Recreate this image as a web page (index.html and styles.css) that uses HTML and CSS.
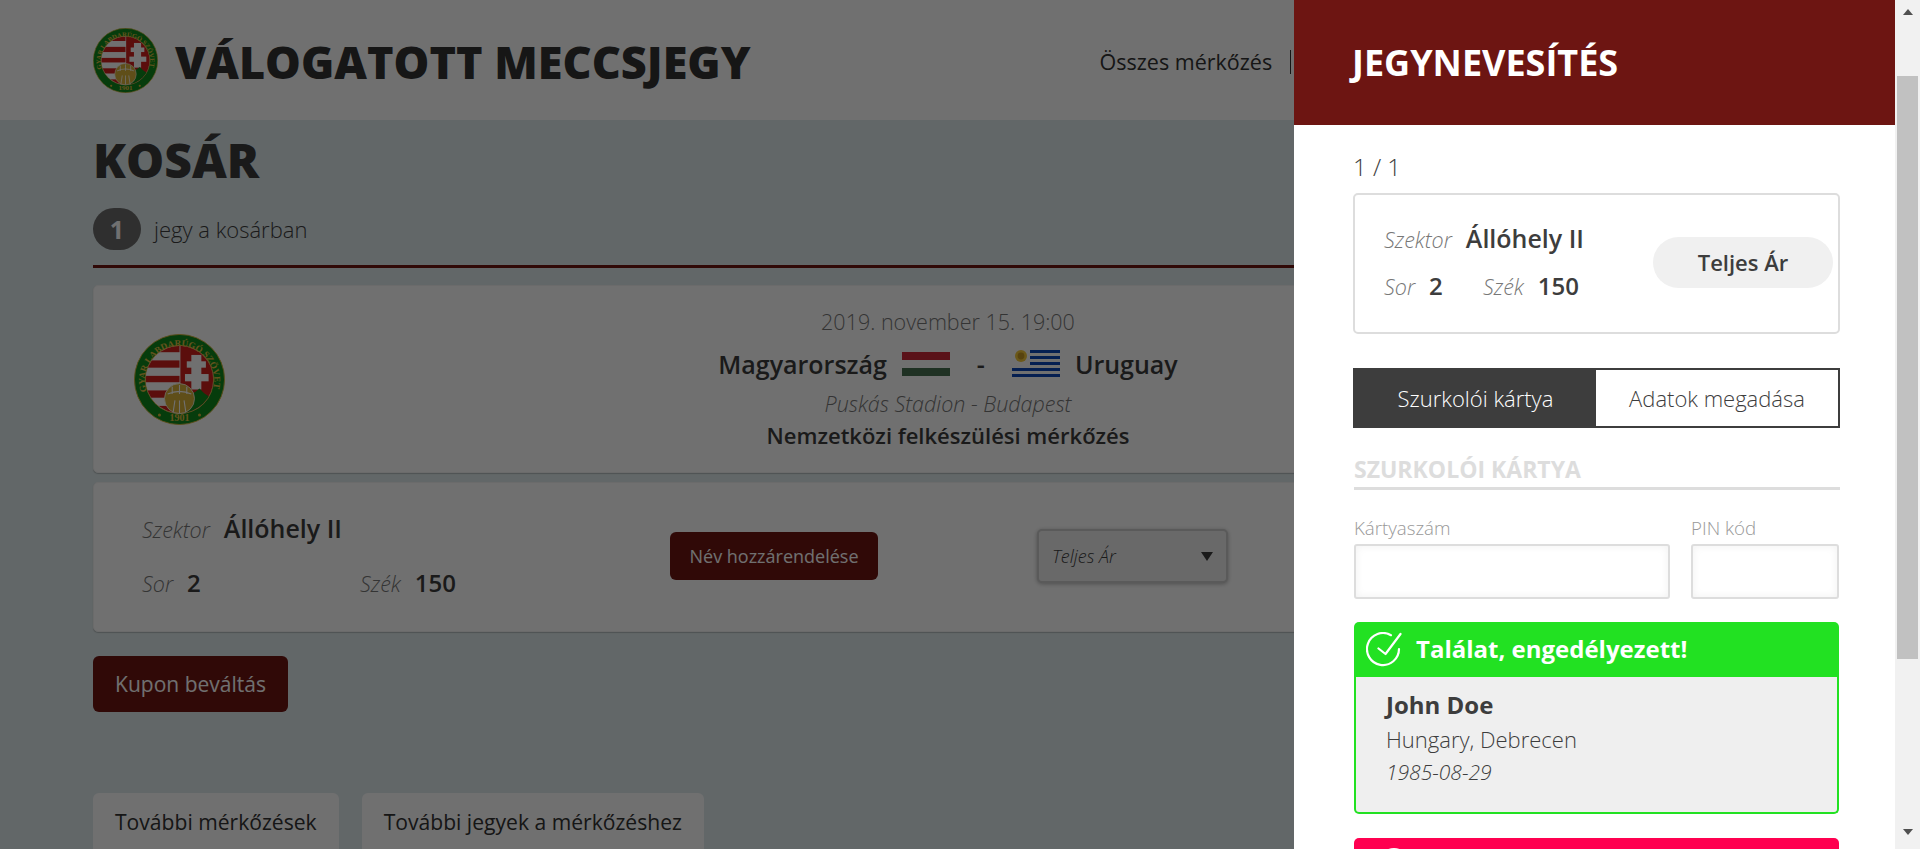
FILE: index.html
```html
<!DOCTYPE html>
<html lang="hu">
<head>
<meta charset="utf-8">
<title>Kosár</title>
<link rel="stylesheet" href="styles.css">
</head>
<body>
<svg class="defs" width="0" height="0" aria-hidden="true">
  <defs>
    <clipPath id="inner"><circle cx="50" cy="50" r="37"/></clipPath>
    <path id="arc-top" d="M13.5 62A38 38 0 1 1 86.5 62"/>
    <symbol id="mlsz" viewBox="0 0 100 100">
      <circle cx="50" cy="50" r="49.5" fill="#0f8a1c" stroke="#d8b23a" stroke-width="1"/>
      <circle cx="50" cy="50" r="37.5" fill="#fff" stroke="#d8b23a" stroke-width="1"/>
      <g clip-path="url(#inner)">
        <rect x="10" y="10" width="40" height="80" fill="#fff"/>
        <rect x="10" y="13" width="40" height="7" fill="#d0201c"/>
        <rect x="10" y="29" width="40" height="8" fill="#d0201c"/>
        <rect x="10" y="46" width="40" height="7" fill="#d0201c"/>
        <rect x="10" y="62" width="40" height="8" fill="#d0201c"/>
        <rect x="10" y="79" width="40" height="8" fill="#d0201c"/>
        <rect x="51" y="10" width="40" height="80" fill="#d0201c"/>
        <rect x="63" y="23" width="11" height="38" fill="#fff"/>
        <rect x="58" y="30" width="21" height="7" fill="#fff"/>
        <rect x="56" y="44" width="26" height="8" fill="#fff"/>
        <path d="M50 90V74q8-8 17-10l5-4 5 5 12 8v17z" fill="#0f8a1c"/>
      </g>
      <circle cx="50" cy="71" r="16.5" fill="#d8b23a" stroke="#fff" stroke-width=".8"/>
      <path d="M37 66q13-6 26 0M42 58v8M50 56v10M58 58v8M43 86l2-13M50 87V73M57 86l-2-13" fill="none" stroke="#fff" stroke-width="1.2"/>
      <text class="seal-text" font-size="10"><textPath href="#arc-top" startOffset="50%" text-anchor="middle">MAGYAR LABDARÚGÓ SZÖVETSÉG</textPath></text>
      <text class="seal-text" x="50" y="96" font-size="11" text-anchor="middle">1901</text>
      <circle cx="28" cy="89" r="1.7" fill="#d8b23a"/>
      <circle cx="72" cy="89" r="1.7" fill="#d8b23a"/>
    </symbol>
  </defs>
</svg>

<div class="page">
  <header class="site-header">
    <svg class="logo-small"><use href="#mlsz"/></svg>
    <div class="site-title">VÁLOGATOTT MECCSJEGY</div>
    <nav class="site-nav"><a>Összes mérkőzés</a><span class="nav-sep"></span></nav>
  </header>

  <main class="content">
    <h1 class="page-title">KOSÁR</h1>
    <div class="cart-count">
      <span class="count-badge">1</span>
      <span>jegy a kosárban</span>
    </div>

    <section class="card match-card">
      <svg class="logo-large"><use href="#mlsz"/></svg>
      <div class="match-info">
        <div class="match-date">2019. november 15. 19:00</div>
        <div class="match-teams">
          <span>Magyarország</span>
          <svg class="flag" viewBox="0 0 48 24"><rect width="48" height="8" fill="#ce2939"/><rect y="8" width="48" height="8" fill="#fff"/><rect y="16" width="48" height="8" fill="#477050"/></svg>
          <span class="dash">-</span>
          <svg class="flag flag-uy" viewBox="0 0 48 27">
            <rect width="48" height="27" fill="#fff"/>
            <g fill="#0d47b8"><rect x="18" y="0" width="30" height="3"/><rect x="18" y="6" width="30" height="3"/><rect x="18" y="12" width="30" height="3"/><rect y="18" width="48" height="3"/><rect y="24" width="48" height="3"/></g>
            <circle cx="9" cy="6" r="6" fill="#f3c83a"/><circle cx="9" cy="6" r="3.4" fill="#c79a22"/>
          </svg>
          <span>Uruguay</span>
        </div>
        <div class="match-venue">Puskás Stadion - Budapest</div>
        <div class="match-type">Nemzetközi felkészülési mérkőzés</div>
      </div>
    </section>

    <section class="card ticket-row">
      <div class="seat">
        <div class="seat-first"><i>Szektor</i><b>Állóhely II</b></div>
        <div class="seat-line"><div><i>Sor</i><b class="num">2</b></div><div><i>Szék</i><b class="num">150</b></div></div>
      </div>
      <div><button class="btn btn-assign">Név hozzárendelése</button></div>
      <div class="select-box"><span>Teljes Ár</span><span class="caret"></span></div>
    </section>

    <button class="btn btn-coupon">Kupon beváltás</button>

    <div class="more-links">
      <a class="more-link">További mérkőzések</a>
      <a class="more-link">További jegyek a mérkőzéshez</a>
    </div>
  </main>
</div>

<div class="overlay"></div>

<aside class="panel">
  <header class="panel-head">JEGYNEVESÍTÉS</header>
  <div class="panel-body">
    <div class="pager">1 / 1</div>
    <div class="panel-ticket">
      <div class="seat panel-seat">
        <div class="seat-first"><i>Szektor</i><b>Állóhely II</b></div>
        <div class="seat-line"><div><i>Sor</i><b class="num">2</b></div><div><i>Szék</i><b class="num">150</b></div></div>
      </div>
      <div class="price-pill">Teljes Ár</div>
    </div>
    <div class="tabs">
      <div class="tab tab-active">Szurkolói kártya</div>
      <div class="tab">Adatok megadása</div>
    </div>
    <h2 class="section-title">SZURKOLÓI KÁRTYA</h2>
    <div class="form-row">
      <label class="field field-card">Kártyaszám<span class="input"></span></label>
      <label class="field field-pin">PIN kód<span class="input"></span></label>
    </div>
    <div class="result result-ok">
      <div class="result-head">
        <svg class="check" viewBox="0 0 36 36"><path d="M25 3.2A16 16 0 1 0 33 17" fill="none" stroke="#fff" stroke-width="2.2" stroke-linecap="round"/><path d="M12.5 16.5l7 5.5L34.5 2" fill="none" stroke="#fff" stroke-width="2.2" stroke-linecap="round" stroke-linejoin="round"/></svg>
        <span class="result-title">Találat, engedélyezett!</span>
      </div>
      <div class="result-body">
        <div class="person-name">John Doe</div>
        <div class="person-place">Hungary, Debrecen</div>
        <div class="person-date">1985-08-29</div>
      </div>
    </div>
    <div class="result-error"><span class="error-icon"></span></div>
  </div>
</aside>

<div class="scrollbar">
  <span class="arrow arrow-up"></span>
  <span class="thumb"></span>
  <span class="arrow arrow-down"></span>
</div>
</body>
</html>
```

FILE: styles.css
```css
* { box-sizing: border-box; }
html, body { margin: 0; height: 849px; overflow: hidden; }
body {
  position: relative;
  font-family: "Open Sans", "Liberation Sans", sans-serif;
  color: #3d3d3d;
  background: #dfeaec;
}
.defs { position: absolute; }
.seal-text { font-family: "Liberation Serif", serif; fill: #e3bd45; font-weight: 700; }

.page { width: 1920px; }
.site-header {
  display: flex;
  align-items: center;
  height: 120px;
  padding: 0 93px;
  background: #fff;
}
.logo-small { width: 65px; height: 65px; }
.site-title {
  margin: 3px 0 0 17px;
  font-size: 45px;
  font-weight: 800;
  color: #333;
  line-height: 1;
  white-space: nowrap;
}
.site-nav { display: flex; align-items: center; margin: 3px 0 0 349px; font-size: 21.5px; color: #333; white-space: nowrap; }
.nav-sep { width: 1px; height: 24px; margin-left: 18px; background: #333; }

.content { width: 1734px; margin-left: 93px; }
.page-title { margin: 0; font-size: 48px; font-weight: 800; line-height: 80px; color: #3d3d3d; }
.cart-count {
  display: flex;
  align-items: center;
  gap: 13px;
  margin-top: 8px;
  padding-bottom: 15px;
  border-bottom: 3px solid #6d1512;
  font-size: 22px;
  font-weight: 300;
}
.count-badge {
  width: 48px;
  height: 42px;
  border-radius: 21px;
  background: #6b6b6b;
  color: #fff;
  font-size: 25px;
  font-weight: 700;
  text-align: center;
  line-height: 42px;
}
.card {
  background: #fff;
  border: 1px solid #f4f4f4;
  border-radius: 5px;
  box-shadow: 0 1px 1px rgba(0,0,0,.2);
}
.match-card {
  display: grid;
  grid-template-columns: 91px 1446px;
  align-items: center;
  height: 188px;
  margin-top: 17px;
  padding-left: 40px;
}
.logo-large { width: 91px; height: 91px; }
.match-info { padding-bottom: 2px; text-align: center; }
.match-date { font-size: 21.5px; font-weight: 300; line-height: 30px; color: #777; }
.match-teams {
  display: flex;
  justify-content: center;
  align-items: center;
  height: 42px;
  margin-top: 6px;
  font-size: 25px;
  font-weight: 600;
}
.flag { width: 48px; height: 24px; margin: 0 15px; }
.flag-uy { height: 27px; }
.dash { width: 14px; margin: 0 9px; }
.match-venue { margin-top: 4px; font-size: 21.5px; font-weight: 300; font-style: italic; line-height: 30px; color: #777; }
.match-type { margin-top: 1px; font-size: 22px; font-weight: 600; line-height: 30px; }

.ticket-row {
  display: grid;
  grid-template-columns: 528px 367px 191px;
  align-items: center;
  height: 150px;
  margin-top: 9px;
  padding-left: 48px;
}
.seat { padding-bottom: 2px; font-size: 25px; line-height: 30px; }
.seat-first, .seat-line > div { display: flex; align-items: baseline; }
.seat i { margin-right: 14px; font-size: 21.5px; font-weight: 300; color: #777; }
.seat b { font-weight: 600; }
.seat .num { font-size: 24px; }
.seat-line { display: grid; grid-template-columns: 218px auto; margin-top: 23px; }
.btn {
  border: 0;
  border-radius: 6px;
  background: #6d1512;
  color: #fff;
  font-family: inherit;
  padding: 0;
}
.btn-assign { display: block; width: 208px; height: 48px; margin-bottom: 2px; font-size: 18px; }
.select-box {
  display: flex;
  justify-content: space-between;
  align-items: center;
  height: 54px;
  margin-bottom: 2px;
  padding: 0 13px;
  border: 2px solid #ccc;
  border-radius: 5px;
  background: #f0f0f0;
  box-shadow: 0 1px 4px rgba(0,0,0,.3);
  font-size: 18px;
  font-style: italic;
  font-weight: 300;
}
.caret { width: 0; height: 0; border: 6px solid transparent; border-top: 9px solid #3d3d3d; border-bottom: 0; }
.btn-coupon { display: block; width: 195px; height: 56px; margin-top: 24px; font-size: 21px; }
.more-links { display: flex; gap: 23px; margin-top: 81px; }
.more-link {
  padding: 15px 22px;
  height: 70px;
  border-radius: 6px;
  background: #fff;
  font-size: 21.1px;
  line-height: 28px;
  color: #333;
}

.overlay { position: absolute; inset: 0; background: rgba(0,0,0,.56); }

.panel {
  position: absolute;
  top: 0;
  left: 1294px;
  width: 601px;
  height: 849px;
  overflow: hidden;
  background: #fff;
}
.panel-head {
  height: 125px;
  padding: 40px 0 0 58px;
  background: #6d1512;
  color: #fff;
  font-size: 36px;
  font-weight: 700;
  line-height: 46px;
}
.panel-body { padding: 28px 55px 0 59px; }
.pager { font-size: 24px; font-weight: 300; line-height: 28px; }
.panel-ticket {
  display: flex;
  justify-content: space-between;
  align-items: center;
  height: 141px;
  margin-top: 12px;
  padding: 0 5px 0 29px;
  border: 2px solid #ddd;
  border-radius: 5px;
}
.panel-seat .seat-line { grid-template-columns: 99px auto; margin-top: 16px; }
.price-pill {
  width: 180px;
  height: 51px;
  margin-bottom: 2px;
  border-radius: 26px;
  background: #f0f0f0;
  font-size: 22px;
  font-weight: 600;
  line-height: 51px;
  text-align: center;
}
.tabs { display: flex; height: 60px; margin-top: 34px; border: 2px solid #3d3d3d; }
.tab { flex: 1; font-size: 22px; font-weight: 300; line-height: 56px; text-align: center; }
.tab-active { flex: 0 0 241px; background: #3d3d3d; color: #fff; }
.section-title {
  margin: 28px 0 0 1px;
  padding-bottom: 5px;
  border-bottom: 3px solid #ddd;
  color: #ddd;
  font-size: 23px;
  font-weight: 700;
  line-height: 26px;
}
.form-row { display: flex; gap: 21px; margin: 25px 0 0 1px; }
.field { display: block; font-size: 18.7px; font-weight: 300; line-height: 26px; color: #999; }
.field-card { width: 316px; }
.field-pin { width: 148px; }
.input {
  display: block;
  height: 55px;
  margin-top: 3px;
  border: 2px solid #ddd;
  border-radius: 3px;
  box-shadow: inset 0 0 8px rgba(0,0,0,.06);
}
.result { margin: 23px 1px 0; }
.result-head {
  display: flex;
  align-items: center;
  gap: 14px;
  height: 55px;
  padding-left: 12px;
  border-radius: 5px 5px 0 0;
  background: #22e122;
  color: #fff;
  font-size: 24px;
  font-weight: 700;
}
.check { width: 36px; height: 36px; }
.result-title { margin-bottom: 2px; }
.result-body {
  height: 137px;
  padding: 11px 30px;
  border: 2px solid #22e122;
  border-top: 0;
  border-radius: 0 0 5px 5px;
  background: #efefef;
}
.person-name { font-size: 24px; font-weight: 700; line-height: 34px; }
.person-place { font-size: 22px; font-weight: 300; line-height: 34px; }
.person-date { margin-top: 1px; font-size: 21px; font-weight: 300; font-style: italic; line-height: 30px; }
.result-error { position: relative; height: 60px; margin: 24px 1px 0; border-radius: 5px 5px 0 0; background: #ff0050; }
.error-icon { position: absolute; top: 10px; left: 25px; width: 30px; height: 30px; border: 2px solid #fff; border-radius: 50%; }

.scrollbar {
  position: absolute;
  top: 0;
  right: 0;
  display: flex;
  flex-direction: column;
  align-items: center;
  width: 25px;
  height: 849px;
  background: #f1f1f1;
}
.arrow { display: block; width: 0; height: 0; border: 5px solid transparent; }
.arrow-up { margin-top: 9px; border-bottom: 6px solid #505050; border-top: 0; }
.thumb { display: block; width: 21px; height: 583px; margin-top: 61px; background: #c1c1c1; }
.arrow-down { margin-top: 170px; border-top: 6px solid #505050; border-bottom: 0; }
```
